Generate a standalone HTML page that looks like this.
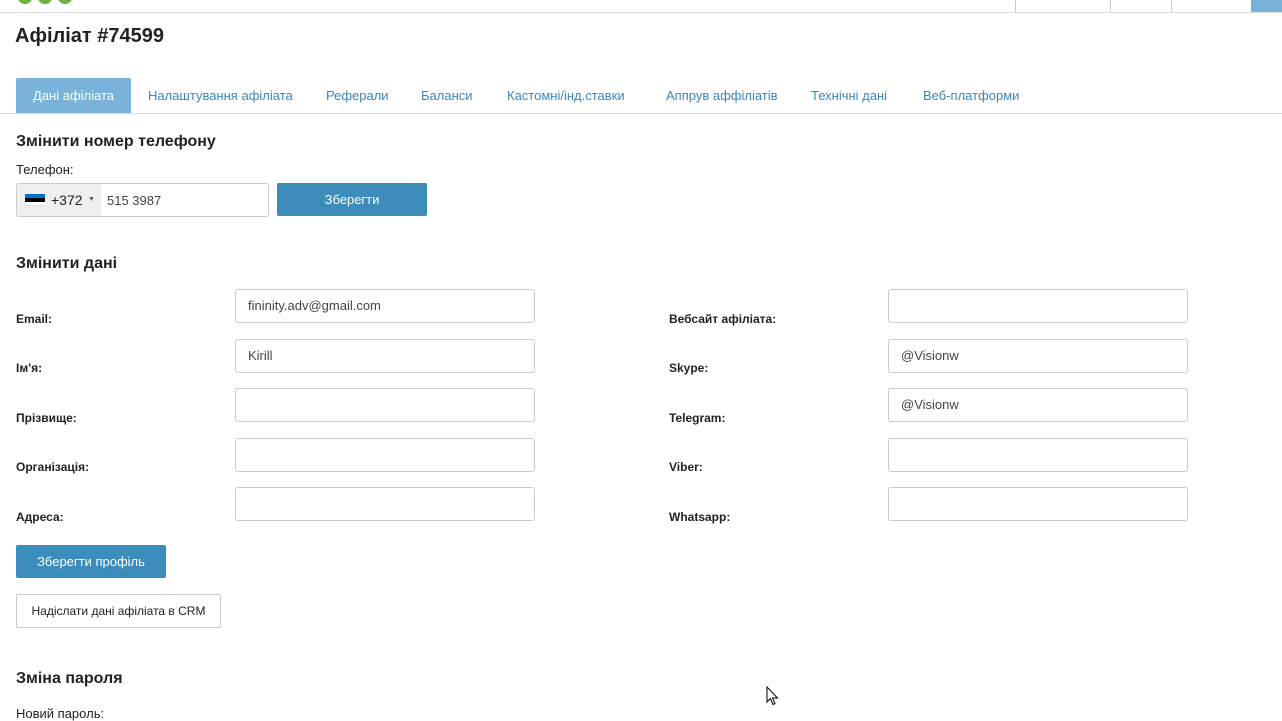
<!DOCTYPE html>
<html><head><meta charset="utf-8"><style>
*{box-sizing:border-box;margin:0;padding:0}
body{width:1282px;height:712px;overflow:hidden;background:#fff;font-family:"Liberation Sans",sans-serif;color:#222;position:relative;font-size:13px}
.a{position:absolute}
.h{font-weight:bold;font-size:16px;color:#222}
.inp{position:absolute;height:34px;border:1px solid #ccc;border-radius:3px;background:#fff;font-size:13px;color:#444;padding:8px 12px}
.lbl{position:absolute;font-weight:bold;font-size:12px;color:#222}
.tab{position:absolute;top:88px;font-size:13px;color:#3a87c0}
.btn{position:absolute;background:#3c8dbc;color:#fff;border-radius:2px;font-size:13px;text-align:center}
</style></head><body>
<div class="a" style="left:0;top:12px;width:1282px;height:1px;background:#ddd"></div>
<div class="a" style="left:18px;top:-8px;width:14px;height:12px;border-radius:50%;background:#6cb33f"></div>
<div class="a" style="left:38px;top:-8px;width:14px;height:12px;border-radius:50%;background:#6cb33f"></div>
<div class="a" style="left:58px;top:-8px;width:14px;height:12px;border-radius:50%;background:#6cb33f"></div>
<div class="a" style="left:1015px;top:0;width:1px;height:12px;background:#ccc"></div>
<div class="a" style="left:1110px;top:0;width:1px;height:12px;background:#ccc"></div>
<div class="a" style="left:1171px;top:0;width:1px;height:12px;background:#ccc"></div>
<div class="a" style="left:1251px;top:0;width:31px;height:12px;background:#7ab3d9"></div>
<div class="a" style="left:15px;top:25px;font-size:20px;font-weight:bold;color:#222">Афіліат #74599</div>
<div class="a" style="left:0;top:113px;width:1282px;height:1px;background:#ddd"></div>
<div class="a" style="left:16px;top:78px;width:115px;height:35px;background:#7ab3d9;border-radius:2px 2px 0 0"></div>
<div class="tab" style="left:33px;color:#fff">Дані афіліата</div>
<div class="tab" style="left:148px">Налаштування афіліата</div>
<div class="tab" style="left:326px">Реферали</div>
<div class="tab" style="left:421px">Баланси</div>
<div class="tab" style="left:507px">Кастомні/інд.ставки</div>
<div class="tab" style="left:666px">Аппрув аффіліатів</div>
<div class="tab" style="left:811px">Технічні дані</div>
<div class="tab" style="left:923px">Веб-платформи</div>
<div class="a h" style="left:16px;top:133px">Змінити номер телефону</div>
<div class="a" style="left:16px;top:162px;font-size:13px">Телефон:</div>
<div class="inp" style="left:16px;top:183px;width:253px;padding:0"></div>
<div class="a" style="left:17px;top:184px;width:84px;height:32px;background:#f0f0f0"></div>
<div class="a" style="left:25px;top:194px;width:20px;height:4px;background:#0072ce"></div>
<div class="a" style="left:25px;top:198px;width:20px;height:4px;background:#000"></div>
<div class="a" style="left:25px;top:202px;width:20px;height:4px;background:#fff;border-bottom:1px solid #ddd"></div>
<div class="a" style="left:51px;top:192px;font-size:14px">+372</div>
<div class="a" style="left:88px;top:196px;font-size:7px;color:#555">▼</div>
<div class="a" style="left:107px;top:193px;font-size:13px;color:#444">515 3987</div>
<div class="btn" style="left:277px;top:183px;width:150px;height:33px;line-height:33px">Зберегти</div>
<div class="a h" style="left:16px;top:255px">Змінити дані</div>
<div class="inp" style="left:235px;top:289px;width:300px">fininity.adv@gmail.com</div>
<div class="inp" style="left:235px;top:339px;width:300px">Kirill</div>
<div class="inp" style="left:235px;top:388px;width:300px"></div>
<div class="inp" style="left:235px;top:438px;width:300px"></div>
<div class="inp" style="left:235px;top:487px;width:300px"></div>
<div class="lbl" style="left:16px;top:312px">Email:</div>
<div class="lbl" style="left:16px;top:361px">Ім'я:</div>
<div class="lbl" style="left:16px;top:411px">Прізвище:</div>
<div class="lbl" style="left:16px;top:460px">Організація:</div>
<div class="lbl" style="left:16px;top:510px">Адреса:</div>
<div class="inp" style="left:888px;top:289px;width:300px"></div>
<div class="inp" style="left:888px;top:339px;width:300px">@Visionw</div>
<div class="inp" style="left:888px;top:388px;width:300px">@Visionw</div>
<div class="inp" style="left:888px;top:438px;width:300px"></div>
<div class="inp" style="left:888px;top:487px;width:300px"></div>
<div class="lbl" style="left:669px;top:312px">Вебсайт афіліата:</div>
<div class="lbl" style="left:669px;top:361px">Skype:</div>
<div class="lbl" style="left:669px;top:411px">Telegram:</div>
<div class="lbl" style="left:669px;top:460px">Viber:</div>
<div class="lbl" style="left:669px;top:510px">Whatsapp:</div>
<div class="btn" style="left:16px;top:545px;width:150px;height:33px;line-height:33px">Зберегти профіль</div>
<div class="a" style="left:16px;top:594px;width:205px;height:34px;border:1px solid #ccc;border-radius:2px;line-height:32px;text-align:center;font-size:12px;color:#222">Надіслати дані афіліата в CRM</div>
<div class="a h" style="left:16px;top:670px">Зміна пароля</div>
<div class="a" style="left:16px;top:706px;font-size:13px">Новий пароль:</div>
<svg class="a" style="left:766px;top:686px" width="14" height="21" viewBox="0 0 14 21"><path d="M1 1 L1 16 L4.5 12.5 L7 18.5 L9 17.6 L6.6 12 L11.5 12 Z" fill="#fff" stroke="#000" stroke-width="1"/></svg>
</body></html>
